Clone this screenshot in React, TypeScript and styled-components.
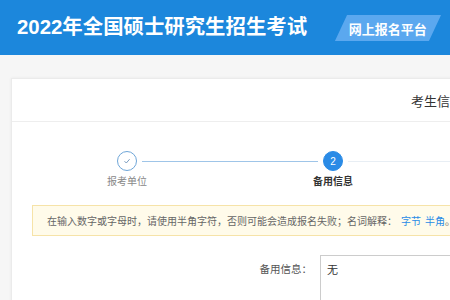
import React from "react";
import styled, { createGlobalStyle } from "styled-components";

const Global = createGlobalStyle`
  html, body { margin: 0; padding: 0; overflow: hidden; }
  body {
    background: #f6f6f6;
    font-family: "Liberation Sans", "Noto Sans CJK SC", sans-serif;
  }
`;

const Header = styled.header`
  height: 55px;
  background: #1c87dc;
  display: flex;
  align-items: center;
  padding-left: 17px;
`;

const Title = styled.h1`
  margin: 0;
  font-size: 20.4px;
  line-height: 1;
  font-weight: bold;
  color: #fff;
  white-space: nowrap;
`;

const Badge = styled.div`
  margin-left: 34px;
  width: 94px;
  height: 26px;
  background: #5ba8ef;
  transform: skewX(-25deg);
  display: flex;
  align-items: center;
  justify-content: center;
`;

const BadgeText = styled.span`
  transform: skewX(25deg);
  color: #fff;
  font-size: 13px;
  font-weight: bold;
  white-space: nowrap;
`;

const Main = styled.main`
  padding: 23px 0 0 11px;
`;

const Card = styled.section`
  width: 850px;
  background: #fff;
  border: 1px solid #ebebeb;
  box-shadow: 0 0 3px rgba(0, 0, 0, 0.06);
`;

const CardHead = styled.div`
  height: 42px;
  border-bottom: 1px solid #eeeeee;
  display: flex;
  align-items: center;
  justify-content: center;
  font-size: 13px;
  color: #333;
`;

const CardBody = styled.div`
  padding: 29px 0 40px 0;
`;

const Steps = styled.div`
  display: flex;
  align-items: flex-start;
  margin-left: 105px;
`;

const Step = styled.div`
  width: 20px;
  display: flex;
  flex-direction: column;
  align-items: center;
`;

const Circle = styled.div<{ $active?: boolean }>`
  width: 20px;
  height: 20px;
  box-sizing: border-box;
  border-radius: 50%;
  border: 1px solid ${(p) => (p.$active ? "#2a8be6" : "#6fa6d8")};
  background: ${(p) => (p.$active ? "#2a8be6" : "#fff")};
  color: #fff;
  font-size: 10px;
  display: flex;
  align-items: center;
  justify-content: center;
`;

const StepLabel = styled.div<{ $active?: boolean }>`
  margin-top: 4px;
  font-size: 10px;
  line-height: 13px;
  white-space: nowrap;
  color: ${(p) => (p.$active ? "#333" : "#888")};
  font-weight: ${(p) => (p.$active ? "bold" : "normal")};
`;

const Connector = styled.div<{ $done?: boolean; $w: number }>`
  width: ${(p) => p.$w}px;
  height: 1px;
  margin: 10px 5px 0;
  background: ${(p) => (p.$done ? "#9fc5e8" : "#e8eef4")};
`;

const Notice = styled.div`
  margin: 17px 0 0 20px;
  height: 29px;
  background: #fffbea;
  border: 1px solid #f6e3a8;
  padding-left: 14px;
  display: flex;
  align-items: center;
  font-size: 10px;
  color: #666;
  white-space: nowrap;
`;

const Link = styled.a`
  color: #2a8be6;
  text-decoration: none;
  margin-left: 4px;
`;

const FormRow = styled.div`
  margin-top: 19px;
  display: grid;
  grid-template-columns: 300px 500px;
  column-gap: 8px;
  align-items: start;
`;

const Label = styled.label`
  text-align: right;
  font-size: 10.5px;
  color: #555;
  padding-top: 6px;
`;

const TextBox = styled.div`
  height: 80px;
  border: 1px solid #ccc;
  padding: 5px 6px;
  font-size: 11px;
  color: #333;
`;

export default function App() {
  return (
    <>
      <Global />
      <Header>
        <Title>2022年全国硕士研究生招生考试</Title>
        <Badge>
          <BadgeText>网上报名平台</BadgeText>
        </Badge>
      </Header>
      <Main>
        <Card>
          <CardHead>考生信息</CardHead>
          <CardBody>
            <Steps>
              <Step>
                <Circle>
                  <svg width="10" height="10" viewBox="0 0 10 10">
                    <path d="M2.5 5.2 L4.3 7 L7.6 3.2" fill="none" stroke="#7a9cc0" strokeWidth="1" />
                  </svg>
                </Circle>
                <StepLabel>报考单位</StepLabel>
              </Step>
              <Connector $done $w={176} />
              <Step>
                <Circle $active>2</Circle>
                <StepLabel $active>备用信息</StepLabel>
              </Step>
              <Connector $w={300} />
            </Steps>
            <Notice>
              在输入数字或字母时，请使用半角字符，否则可能会造成报名失败；名词解释：
              <Link href="#">字节</Link>
              <Link href="#">半角</Link>。
            </Notice>
            <FormRow>
              <Label>备用信息：</Label>
              <TextBox>无</TextBox>
            </FormRow>
          </CardBody>
        </Card>
      </Main>
    </>
  );
}
